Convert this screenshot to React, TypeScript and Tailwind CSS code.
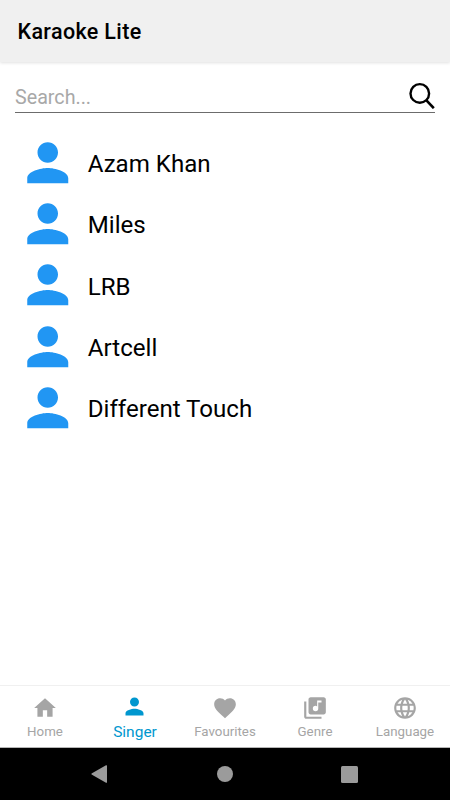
import { useState } from "react";
import { MdFavorite, MdHome, MdLanguage, MdLibraryMusic, MdPerson } from "react-icons/md";

const singers = ["Azam Khan", "Miles", "LRB", "Artcell", "Different Touch"];

const tabs = [
  { label: "Home", Icon: MdHome },
  { label: "Singer", Icon: MdPerson },
  { label: "Favourites", Icon: MdFavorite },
  { label: "Genre", Icon: MdLibraryMusic },
  { label: "Language", Icon: MdLanguage },
];

export default function App() {
  const [active, setActive] = useState("Singer");
  const [query, setQuery] = useState("");

  const visible = singers.filter((s) => s.toLowerCase().includes(query.toLowerCase()));

  return (
    <div className="flex flex-col w-[450px] h-[800px] bg-white overflow-hidden font-['Roboto',sans-serif]">
      <header className="h-[62px] shrink-0 bg-[#f0f0f0] px-[17.5px] pt-0.5 flex items-center shadow-[0_1px_3px_rgba(0,0,0,0.12)]">
        <h1 className="text-[21.5px] leading-6 tracking-[0.35px] font-medium text-black">Karaoke Lite</h1>
      </header>

      <main className="flex-1">
        <div className="mx-[15px] mt-[15px] h-9 flex items-center border-b border-[#6c6c6c]">
          <input
            value={query}
            onChange={(e) => setQuery(e.target.value)}
            placeholder="Search..."
            className="flex-1 min-w-0 pt-1.5 text-[19.7px] leading-6 text-black placeholder:text-[#a8a8a8] outline-none"
          />
          <svg viewBox="0 0 27 28" className="w-[27px] h-7 shrink-0" fill="none" stroke="black" strokeWidth="2.4">
            <circle cx="11.8" cy="12.4" r="9.3" />
            <path d="M18.2 19.2l7.6 8" strokeWidth="2.6" />
          </svg>
        </div>

        <ul className="mt-[19px] pl-[17.3px]">
          {visible.map((name) => (
            <li key={name} className="flex items-center h-[61.25px]">
              <MdPerson className="w-[61.5px] h-[61.5px] text-[#2196f3]" />
              <span className="ml-[9px] pt-[3px] text-[24.1px] leading-7 text-black">{name}</span>
            </li>
          ))}
        </ul>
      </main>

      <nav className="h-[63px] shrink-0 flex border-t border-[#f0f0f0] border-b border-b-[#b5b5b5]">
        {tabs.map(({ label, Icon }) => (
          <button
            key={label}
            onClick={() => setActive(label)}
            className={`w-[90px] flex flex-col items-center ${active === label ? "pt-[7px] text-[#0097cf]" : "pt-[9px] text-[#a5a5a5]"}`}
          >
            <Icon className={active === label ? "w-[27px] h-[27px] mr-px" : "w-[26px] h-[26px]"} />
            <span className={active === label ? "mt-[3px] text-[15.5px] leading-[18px]" : "mt-[3px] text-[13.3px] leading-4"}>
              {label}
            </span>
          </button>
        ))}
      </nav>

      {/* system navigation */}
      <footer className="h-[52px] shrink-0 bg-black flex items-center text-[#9b9b9b]">
        <svg viewBox="0 0 16 18" className="w-4 h-[18px] ml-[91px]" fill="currentColor">
          <path d="M0.6 8.4Q0 9 0.6 9.6L15 17.7Q16 18 16 17.2V0.8Q16 0 15 0.3z" />
        </svg>
        <div className="w-4 h-4 ml-[110px] rounded-full bg-[#9b9b9b]" />
        <div className="w-[17px] h-[17px] ml-[107.5px] rounded-[1.5px] bg-[#9b9b9b]" />
      </footer>
    </div>
  );
}
